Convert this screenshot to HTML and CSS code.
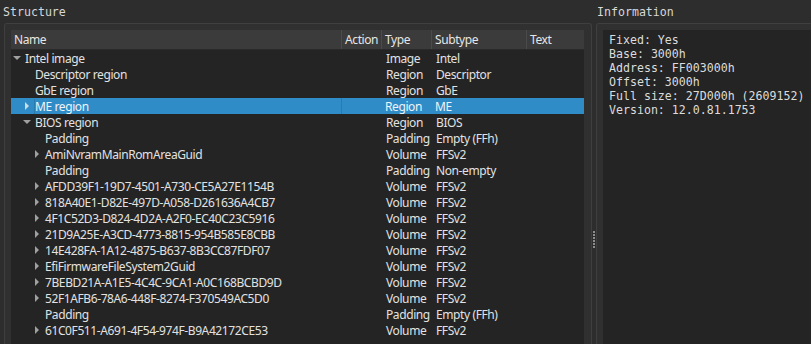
FILE: index.html
```html
<!DOCTYPE html>
<html lang="en">
<head>
    <meta charset="UTF-8">
    <title>UEFITool - Structure</title>
    <link rel="stylesheet" href="styles.css">
</head>
<body>

    <div class="window">
        <section class="pane pane-structure">
            <div class="pane-title">Structure</div>
            <div class="groupbox">
                <div class="tree">
                    <div class="tree-header">
                        <div class="col col-name">Name</div>
                        <div class="col col-action">Action</div>
                        <div class="col col-type">Type</div>
                        <div class="col col-subtype">Subtype</div>
                        <div class="col col-text">Text</div>
                    </div>

                    <div class="tree-body">
                        <!-- level 0 -->
                        <div class="row">
                            <div class="col col-name lvl-0"><span class="arrow down"></span>Intel image</div>
                            <div class="col col-action"></div>
                            <div class="col col-type">Image</div>
                            <div class="col col-subtype">Intel</div>
                            <div class="col col-text"></div>
                        </div>
                        <!-- level 1 -->
                        <div class="row">
                            <div class="col col-name lvl-1"><span class="arrow"></span>Descriptor region</div>
                            <div class="col col-action"></div>
                            <div class="col col-type">Region</div>
                            <div class="col col-subtype">Descriptor</div>
                            <div class="col col-text"></div>
                        </div>
                        <div class="row">
                            <div class="col col-name lvl-1"><span class="arrow"></span>GbE region</div>
                            <div class="col col-action"></div>
                            <div class="col col-type">Region</div>
                            <div class="col col-subtype">GbE</div>
                            <div class="col col-text"></div>
                        </div>
                        <div class="row selected">
                            <div class="col col-name lvl-1"><span class="arrow right"></span><span class="label">ME region</span></div>
                            <div class="col col-action"></div>
                            <div class="col col-type">Region</div>
                            <div class="col col-subtype">ME</div>
                            <div class="col col-text"></div>
                        </div>
                        <div class="row">
                            <div class="col col-name lvl-1"><span class="arrow down"></span>BIOS region</div>
                            <div class="col col-action"></div>
                            <div class="col col-type">Region</div>
                            <div class="col col-subtype">BIOS</div>
                            <div class="col col-text"></div>
                        </div>
                        <!-- level 2: BIOS region children -->
                        <div class="row">
                            <div class="col col-name lvl-2"><span class="arrow"></span>Padding</div>
                            <div class="col col-action"></div>
                            <div class="col col-type">Padding</div>
                            <div class="col col-subtype">Empty (FFh)</div>
                            <div class="col col-text"></div>
                        </div>
                        <div class="row">
                            <div class="col col-name lvl-2"><span class="arrow right"></span>AmiNvramMainRomAreaGuid</div>
                            <div class="col col-action"></div>
                            <div class="col col-type">Volume</div>
                            <div class="col col-subtype">FFSv2</div>
                            <div class="col col-text"></div>
                        </div>
                        <div class="row">
                            <div class="col col-name lvl-2"><span class="arrow"></span>Padding</div>
                            <div class="col col-action"></div>
                            <div class="col col-type">Padding</div>
                            <div class="col col-subtype">Non-empty</div>
                            <div class="col col-text"></div>
                        </div>
                        <div class="row">
                            <div class="col col-name lvl-2"><span class="arrow right"></span>AFDD39F1-19D7-4501-A730-CE5A27E1154B</div>
                            <div class="col col-action"></div>
                            <div class="col col-type">Volume</div>
                            <div class="col col-subtype">FFSv2</div>
                            <div class="col col-text"></div>
                        </div>
                        <div class="row">
                            <div class="col col-name lvl-2"><span class="arrow right"></span>818A40E1-D82E-497D-A058-D261636A4CB7</div>
                            <div class="col col-action"></div>
                            <div class="col col-type">Volume</div>
                            <div class="col col-subtype">FFSv2</div>
                            <div class="col col-text"></div>
                        </div>
                        <div class="row">
                            <div class="col col-name lvl-2"><span class="arrow right"></span>4F1C52D3-D824-4D2A-A2F0-EC40C23C5916</div>
                            <div class="col col-action"></div>
                            <div class="col col-type">Volume</div>
                            <div class="col col-subtype">FFSv2</div>
                            <div class="col col-text"></div>
                        </div>
                        <div class="row">
                            <div class="col col-name lvl-2"><span class="arrow right"></span>21D9A25E-A3CD-4773-8815-954B585E8CBB</div>
                            <div class="col col-action"></div>
                            <div class="col col-type">Volume</div>
                            <div class="col col-subtype">FFSv2</div>
                            <div class="col col-text"></div>
                        </div>
                        <div class="row">
                            <div class="col col-name lvl-2"><span class="arrow right"></span>14E428FA-1A12-4875-B637-8B3CC87FDF07</div>
                            <div class="col col-action"></div>
                            <div class="col col-type">Volume</div>
                            <div class="col col-subtype">FFSv2</div>
                            <div class="col col-text"></div>
                        </div>
                        <div class="row">
                            <div class="col col-name lvl-2"><span class="arrow right"></span>EfiFirmwareFileSystem2Guid</div>
                            <div class="col col-action"></div>
                            <div class="col col-type">Volume</div>
                            <div class="col col-subtype">FFSv2</div>
                            <div class="col col-text"></div>
                        </div>
                        <div class="row">
                            <div class="col col-name lvl-2"><span class="arrow right"></span>7BEBD21A-A1E5-4C4C-9CA1-A0C168BCBD9D</div>
                            <div class="col col-action"></div>
                            <div class="col col-type">Volume</div>
                            <div class="col col-subtype">FFSv2</div>
                            <div class="col col-text"></div>
                        </div>
                        <div class="row">
                            <div class="col col-name lvl-2"><span class="arrow right"></span>52F1AFB6-78A6-448F-8274-F370549AC5D0</div>
                            <div class="col col-action"></div>
                            <div class="col col-type">Volume</div>
                            <div class="col col-subtype">FFSv2</div>
                            <div class="col col-text"></div>
                        </div>
                        <div class="row">
                            <div class="col col-name lvl-2"><span class="arrow"></span>Padding</div>
                            <div class="col col-action"></div>
                            <div class="col col-type">Padding</div>
                            <div class="col col-subtype">Empty (FFh)</div>
                            <div class="col col-text"></div>
                        </div>
                        <div class="row">
                            <div class="col col-name lvl-2"><span class="arrow right"></span>61C0F511-A691-4F54-974F-B9A42172CE53</div>
                            <div class="col col-action"></div>
                            <div class="col col-type">Volume</div>
                            <div class="col col-subtype">FFSv2</div>
                            <div class="col col-text"></div>
                        </div>
                    </div>
                </div>
            </div>
        </section>

        <div class="splitter"><span class="grip"></span></div>

        <section class="pane pane-info">
            <div class="pane-title">Information</div>
            <div class="groupbox">
                <pre class="info">Fixed: Yes
Base: 3000h
Address: FF003000h
Offset: 3000h
Full size: 27D000h (2609152)
Version: 12.0.81.1753</pre>
            </div>
        </section>
    </div>

</body>
</html>
```

FILE: styles.css
```css
html, body {
    margin: 0;
    padding: 0;
}
body {
    background-color: #2d2d2d;
    color: #e2e2e2;
    font-family: "Noto Sans", "Open Sans", sans-serif;
    font-size: 12px;
    letter-spacing: -0.4px;
    overflow: hidden;
}
.window {
    display: flex;
    height: 343px;
    padding-top: 1px;
    overflow: hidden;
}
.pane {
    display: flex;
    flex-direction: column;
}
.pane-structure {
    width: 592px;
    flex: none;
}
.pane-info {
    flex: 1;
    min-width: 0;
}
.pane-title {
    height: 22px;
    line-height: 22px;
    font-family: "DejaVu Sans Mono", "Liberation Mono", monospace;
    font-size: 11.6px;
    letter-spacing: 0;
    color: #d8d8d8;
    padding-left: 3px;
}
.pane-info .pane-title {
    padding-left: 1px;
}
.groupbox {
    flex: 1;
    display: flex;
    flex-direction: column;
    min-height: 0;
    background-color: #303030;
    border: 1px solid #3f3f3f;
    border-bottom: none;
    border-radius: 3px 3px 0 0;
}
.pane-structure .groupbox {
    margin-left: 4px;
    padding: 6px 7px 0 6px;
}
.pane-info .groupbox {
    padding: 6px 0 0 6px;
    margin-right: -10px;
}

/* tree view */
.tree {
    flex: 1;
    display: flex;
    flex-direction: column;
    background-color: #242424;
    overflow: hidden;
}
.tree-header {
    display: flex;
    height: 20px;
    line-height: 19px;
    background-color: #3b3b3b;
    border-bottom: 1px solid #2a2a2a;
    box-sizing: border-box;
    color: #e6e6e6;
}
.tree-header .col {
    border-right: 1px solid #4b4b4b;
    padding-left: 3px;
    box-sizing: border-box;
}
.tree-header .col-text {
    border-right: none;
}
.row {
    display: flex;
    height: 16px;
    line-height: 16px;
}
.row .col {
    padding-top: 1px;
    box-sizing: border-box;
}
.col {
    flex: none;
    white-space: nowrap;
    overflow: hidden;
}
.col-name { width: 331px; }
.col-action { width: 40px; }
.col-type { width: 50px; }
.col-subtype { width: 95px; }
.col-text { width: 56px; }

.row .col-type,
.row .col-subtype {
    padding-left: 4px;
}
.row .col-name {
    display: flex;
    align-items: center;
}
.row .col-name.lvl-0 { padding-left: 2px; }
.row .col-name.lvl-1 { padding-left: 12px; }
.row .col-name.lvl-2 { padding-left: 22px; }

.arrow {
    flex: none;
    position: relative;
    width: 12px;
    height: 16px;
    margin-top: -1px;
}
.arrow.right::before {
    content: "";
    position: absolute;
    left: 2px;
    top: 4px;
    border-left: 4px solid #a0a0a0;
    border-top: 4px solid transparent;
    border-bottom: 4px solid transparent;
}
.arrow.down::before {
    content: "";
    position: absolute;
    left: 0;
    top: 6px;
    border-top: 4px solid #a0a0a0;
    border-left: 4px solid transparent;
    border-right: 4px solid transparent;
}

.row.selected {
    background-color: #308cc6;
    color: #eef4fa;
}
.row.selected .arrow.right::before {
    border-left-color: #c8dcec;
}
.row.selected .label {
    border-left: 1px solid rgba(0, 0, 0, 0.12);
    margin-left: -1px;
}
.row.selected .col-action {
    border-left: 1px solid rgba(0, 0, 0, 0.12);
    margin-left: -1px;
}

/* splitter */
.splitter {
    width: 4px;
    flex: none;
    display: flex;
    justify-content: center;
}
.grip {
    width: 2px;
    height: 17px;
    margin-top: 230px;
    background-image: linear-gradient(#8c8c8c 2px, transparent 2px);
    background-size: 2px 3px;
}

/* information */
.info {
    flex: 1;
    margin: 0;
    padding: 3px 6px;
    background-color: #242424;
    font-family: "DejaVu Sans Mono", "Liberation Mono", monospace;
    font-size: 11.6px;
    letter-spacing: 0;
    line-height: 14px;
    color: #dcdcdc;
}
```
